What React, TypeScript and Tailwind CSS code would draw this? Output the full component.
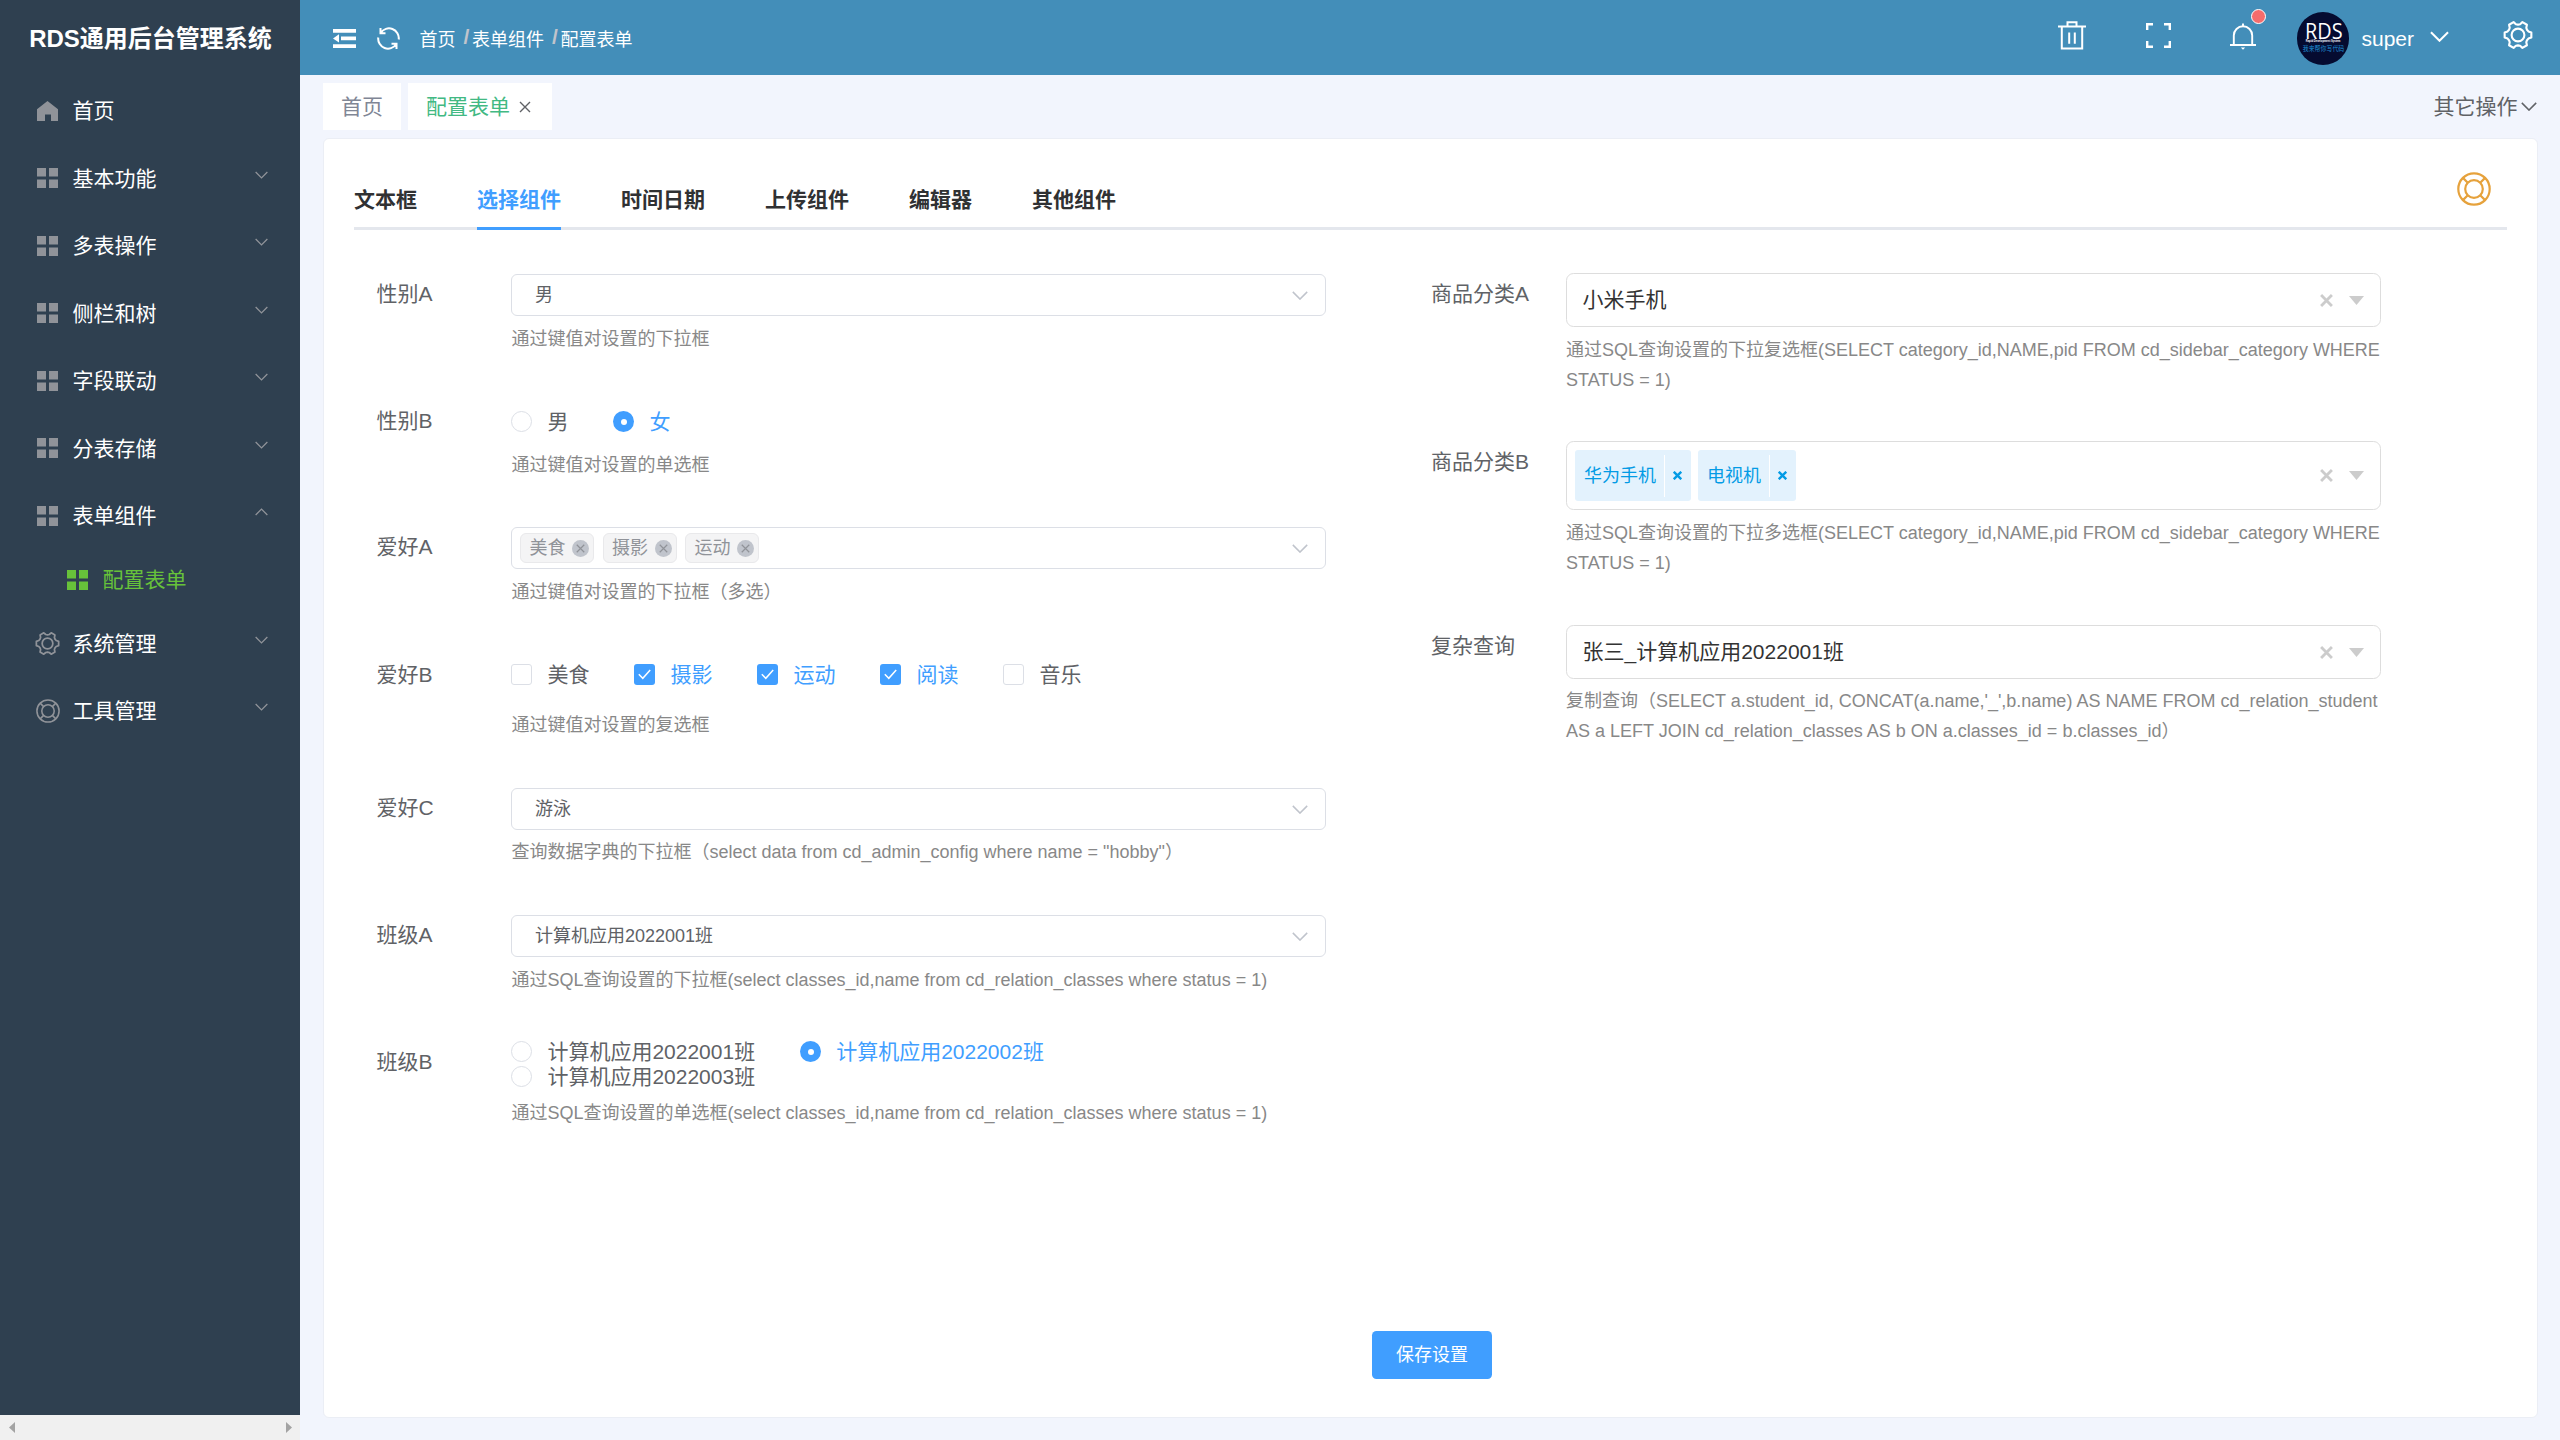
import type { ReactNode } from 'react';
import clsx from 'clsx';

interface MenuEntry {
  title: string;
  icon: 'home' | 'grid' | 'gear' | 'buoy';
  arrow?: 'down' | 'up';
  child?: string;
}

const menu: MenuEntry[] = [
  { title: '首页', icon: 'home' },
  { title: '基本功能', icon: 'grid', arrow: 'down' },
  { title: '多表操作', icon: 'grid', arrow: 'down' },
  { title: '侧栏和树', icon: 'grid', arrow: 'down' },
  { title: '字段联动', icon: 'grid', arrow: 'down' },
  { title: '分表存储', icon: 'grid', arrow: 'down' },
  { title: '表单组件', icon: 'grid', arrow: 'up', child: '配置表单' },
  { title: '系统管理', icon: 'gear', arrow: 'down' },
  { title: '工具管理', icon: 'buoy', arrow: 'down' },
];

const formTabs = ['文本框', '选择组件', '时间日期', '上传组件', '编辑器', '其他组件'];

const gearPoints = Array.from({ length: 6 })
  .flatMap((_, i) => {
    const base = i * 60;
    return [
      [base - 11, 13.6],
      [base + 11, 13.6],
      [base + 19, 11],
      [base + 30, 10.4],
      [base + 41, 11],
    ];
  })
  .map(([deg, r]) => {
    const a = (deg * Math.PI) / 180;
    return `${(15 + r * Math.cos(a)).toFixed(2)},${(15 + r * Math.sin(a)).toFixed(2)}`;
  })
  .join(' ');

function GearIcon({ className }: { className?: string }) {
  return (
    <svg viewBox="0 0 30 30" className={className} fill="none" stroke="currentColor" strokeWidth="2.1" strokeLinejoin="round">
      <polygon points={gearPoints} />
      <circle cx="15" cy="15" r="6.4" />
    </svg>
  );
}

function BuoyIcon({ className }: { className?: string }) {
  return (
    <svg viewBox="0 0 34 34" className={className} fill="none" stroke="currentColor" strokeWidth="2.2">
      <circle cx="17" cy="17" r="15.7" />
      <circle cx="17" cy="17" r="8.8" />
      <path d="M5.900 5.900l4.900 4.900M28.100 5.900l-4.900 4.900M5.900 28.100l4.900-4.900M28.100 28.100l-4.900-4.900" />
    </svg>
  );
}

function GridIcon({ className }: { className?: string }) {
  return (
    <svg viewBox="0 0 21 20" className={className} fill="currentColor">
      <path d="M0 0h9v8.500H0zM12 0h9v8.500h-9zM0 11.500h9V20H0zM12 11.500h9V20h-9z" />
    </svg>
  );
}

function HomeIcon({ className }: { className?: string }) {
  return (
    <svg viewBox="0 0 21 20" className={className} fill="currentColor">
      <path d="M10.500 0L21 8.300V20h-7v-6.500H8V20H0V8.300z" />
    </svg>
  );
}

function Chevron({ className, strokeWidth = 1.3 }: { className?: string; strokeWidth?: number }) {
  return (
    <svg viewBox="0 0 20 11" className={className} fill="none" stroke="currentColor" strokeWidth={strokeWidth}>
      <path d="M1 1l9 9 9-9" vectorEffect="non-scaling-stroke" />
    </svg>
  );
}

function Cross({ className, strokeWidth = 1.4 }: { className?: string; strokeWidth?: number }) {
  return (
    <svg viewBox="0 0 12 12" className={className} fill="none" stroke="currentColor" strokeWidth={strokeWidth}>
      <path d="M1 1l10 10M11 1L1 11" vectorEffect="non-scaling-stroke" />
    </svg>
  );
}

function MenuIcon({ name }: { name: MenuEntry['icon'] }) {
  if (name === 'home') return <HomeIcon className="w-[21px] h-5" />;
  if (name === 'gear') return <GearIcon className="w-[25px] h-[25px]" />;
  if (name === 'buoy') return <BuoyIcon className="w-6 h-6" />;
  return <GridIcon className="w-[21px] h-5" />;
}

function Sidebar() {
  return (
    <aside className="w-[300px] shrink-0 flex flex-col bg-[#2f4050]">
      <div className="h-[77px] flex items-center justify-center pl-px text-2xl font-bold text-white">RDS通用后台管理系统</div>
      <nav className="flex-1">
        {menu.map((item) => (
          <div key={item.title}>
            <div className="h-[67.500px] flex items-center pl-[29.500px] pr-8">
              <span className="w-9 flex justify-center text-[#909399]">
                <MenuIcon name={item.icon} />
              </span>
              <span className="flex-1 ml-[7px] text-[21px] text-white">{item.title}</span>
              {item.arrow && (
                <Chevron className={clsx('w-[13px] h-2 -mt-[7px] text-[#909399]', item.arrow === 'up' && 'rotate-180')} />
              )}
            </div>
            {item.child && (
              <div className="h-[60px] flex items-center pl-[59.500px] text-[#67c23a]">
                <span className="w-9 flex justify-center">
                  <GridIcon className="w-[21px] h-5" />
                </span>
                <span className="ml-[7px] text-[21px]">{item.child}</span>
              </div>
            )}
          </div>
        ))}
      </nav>
      {/* Horizontal scrollbar */}
      <div className="h-[25px] flex items-center justify-between bg-[#f0f0f0] pl-[9px] pr-2">
        <svg viewBox="0 0 6 11" className="w-1.5 h-[11px]" fill="#a3a3a3">
          <path d="M6 0v11L0 5.500z" />
        </svg>
        <svg viewBox="0 0 6 11" className="w-1.5 h-[11px]" fill="#a3a3a3">
          <path d="M0 0v11l6-5.500z" />
        </svg>
      </div>
    </aside>
  );
}

function Header() {
  return (
    <header className="h-[75px] shrink-0 flex items-start bg-[#438eb9] text-white">
      <svg viewBox="0 0 23 19" className="w-[23px] h-[19px] ml-[33px] mt-[29px]" fill="currentColor">
        <path d="M0 0h23v3.700H0zM8 7.500h15v3.700H8zM0 15.300h23V19H0zM0 9.400l6-4.100v8.200z" />
      </svg>
      <svg viewBox="0 0 23 23" className="w-[23px] h-[23px] ml-[21px] mt-[26.500px]" fill="none" stroke="currentColor" strokeWidth="2">
        <path d="M3.500 1v5.200h5M3.800 5.800A9.800 9.800 0 0 1 21.700 12.500M19.500 22v-5.200h-5M19.200 17.200A9.800 9.800 0 0 1 1.300 10.500" />
      </svg>
      <div className="h-[75px] flex items-center ml-[19.500px] pt-1 text-lg">
        <span>首页</span>
        <span className="w-[16.500px] pl-2 -mt-1 font-bold text-[21px] text-[#c0c4cc]">/</span>
        <span>表单组件</span>
        <span className="w-[16.500px] pl-2 -mt-1 font-bold text-[21px] text-[#c0c4cc]">/</span>
        <span>配置表单</span>
      </div>
      <div className="flex-1" />
      <svg viewBox="0 0 28 29" className="w-7 h-[29px] mt-[20.500px]" fill="none" stroke="currentColor" strokeWidth="2">
        <path d="M0 5.500h28M3.800 5.500V27.500h20.400V5.500M9.500 5V1.200h9V5M11.200 11.500v11.200M16.800 11.500v11.200" />
      </svg>
      <svg viewBox="0 0 25 25" className="w-[25px] h-[25px] ml-[60px] mt-[22.500px]" fill="none" stroke="currentColor" strokeWidth="2.400">
        <path d="M1.200 7V1.200H7M18 1.200h5.800V7M23.800 18v5.800H18M7 23.800H1.200V18" />
      </svg>
      <div className="relative ml-[59.500px] mt-[22.500px]">
        <svg viewBox="0 0 26 27" className="w-[26px] h-[27px]" fill="none" stroke="currentColor" strokeWidth="1.900">
          <path d="M0 22h26M3.800 22v-9.500a9.200 9.200 0 0 1 18.400 0V22M13 3.300V.5" />
          <path d="M10.800 24.500h4.400L13 26.800z" fill="currentColor" stroke="none" />
        </svg>
        <span className="absolute -top-[14px] left-[20.500px] w-[15px] h-[15px] rounded-full bg-[#f56c6c] border border-white" />
      </div>
      <div className="w-[52px] h-[53px] ml-[41px] mt-3 rounded-full bg-[#050b30] flex flex-col items-center overflow-hidden">
        <span className="mt-[7px] h-[21px] font-['Open_Sans','Noto_Sans_CJK_SC',sans-serif] text-[22px] leading-[23px] scale-x-90">RDS</span>
        <span className="h-[3px] font-bold text-[3.500px] leading-[3px] whitespace-nowrap scale-x-75">Rapid Development System</span>
        <span className="mt-[1px] text-[7px] leading-[10px] text-[#1e8fd5] whitespace-nowrap scale-x-[.85]">我来帮你写代码</span>
      </div>
      <span className="ml-3 h-[75px] leading-[77px] text-[21px]">super</span>
      <Chevron className="w-[19px] h-[11px] ml-4 mt-[31px]" strokeWidth={2} />
      <GearIcon className="w-[30px] h-[30px] ml-[54px] mr-[27px] mt-5" />
    </header>
  );
}

function TabsBar() {
  return (
    <div className="h-[47px] mt-2 flex text-[21px]">
      <div className="px-[18px] flex items-center bg-white text-[#808695]">首页</div>
      <div className="ml-[7px] pl-[18px] pr-[21px] flex items-center bg-white text-[#42b983]">
        配置表单
        <Cross className="w-3 h-3 ml-[9px] text-[#606266]" />
      </div>
      <div className="ml-auto mr-[1.500px] flex items-center text-[#606266]">
        其它操作
        <Chevron className="w-[16px] h-[9px] ml-[3px]" strokeWidth={1.5} />
      </div>
    </div>
  );
}

interface FieldProps {
  label: string;
  hint: string;
  height: string;
  controlHeight: string;
  children: ReactNode;
}

function Field({ label, hint, height, controlHeight, children }: FieldProps) {
  return (
    <div className={clsx('flex', height)}>
      <div className="w-[135px] shrink-0 text-[21px] leading-[42px] text-[#606266]">{label}</div>
      <div className="w-[815px]">
        <div className={controlHeight}>{children}</div>
        <p className="text-lg leading-[30px] text-[#888]">{hint}</p>
      </div>
    </div>
  );
}

function Select({ value, tags }: { value?: string; tags?: string[] }) {
  return (
    <div className={clsx('h-[42px] relative top-px flex items-center border border-[#dcdfe6] rounded-md pr-[17px]', tags ? 'pl-2' : 'pl-[22.500px]')}>
      {value && <span className="text-lg text-[#606266]">{value}</span>}
      {tags?.map((tag) => (
        <span
          key={tag}
          className="w-[74px] h-[30px] mr-[8.500px] pl-2 flex items-center border border-[#e9e9eb] bg-[#f4f4f5] rounded-md text-lg text-[#909399]"
        >
          {tag}
          <span className="w-[17px] h-[17px] ml-[7px] rounded-full bg-[#c0c4cc] flex items-center justify-center">
            <Cross className="w-[9px] h-[9px]" strokeWidth={1.2} />
          </span>
        </span>
      ))}
      <Chevron className="w-4 h-[9px] ml-auto text-[#c0c4cc]" strokeWidth={1.5} />
    </div>
  );
}

function Radio({ label, checked }: { label: string; checked?: boolean }) {
  return (
    <label className={clsx('flex items-center mr-[45px] text-[21px] leading-[25px]', checked ? 'text-[#409eff]' : 'text-[#606266]')}>
      <span
        className={clsx(
          'w-[21px] h-[21px] mr-[15px] rounded-full flex items-center justify-center',
          checked ? 'bg-[#409eff]' : 'border border-[#dcdfe6]'
        )}
      >
        {checked && <span className="w-1.5 h-1.5 rounded-full bg-white" />}
      </span>
      {label}
    </label>
  );
}

function Checkbox({ label, checked }: { label: string; checked?: boolean }) {
  return (
    <label className={clsx('flex items-center mr-[45px] text-[21px]', checked ? 'text-[#409eff]' : 'text-[#606266]')}>
      <span
        className={clsx(
          'w-[21px] h-[21px] mr-[15px] rounded-[3px] flex items-center justify-center',
          checked ? 'bg-[#409eff]' : 'border border-[#dcdfe6]'
        )}
      >
        {checked && (
          <svg viewBox="0 0 13 11" className="w-[13px] h-[11px]" fill="none" stroke="#fff" strokeWidth="1.500">
            <path d="M.8 5.300l4 4L12.200 1" />
          </svg>
        )}
      </span>
      {label}
    </label>
  );
}

function TreeSelect({ value, tags }: { value?: string; tags?: string[] }) {
  return (
    <div
      className={clsx(
        'flex items-center border border-[#ddd] rounded-[7.500px] pr-4',
        tags ? 'h-[69px] pl-2' : 'h-[54px] pl-[15.500px]'
      )}
    >
      {value && <span className="text-[21px] text-[#333]">{value}</span>}
      {tags?.map((tag) => (
        <span key={tag} className="h-[51px] mr-[7px] pl-[9px] flex items-center rounded-[3px] bg-[#e3f2fd] text-lg text-[#039be5]">
          {tag}
          <span className="h-[42px] w-[27px] ml-2 border-l border-white flex items-center justify-center">
            <Cross className="w-[9px] h-[9px]" strokeWidth={2.4} />
          </span>
        </span>
      ))}
      <Cross className="w-[13px] h-[13px] ml-auto text-[#ccc]" strokeWidth={2.8} />
      <svg viewBox="0 0 15 9" className="w-[15px] h-[9px] ml-4" fill="#ccc">
        <path d="M0 0h15L7.500 9z" />
      </svg>
    </div>
  );
}

export default function App() {
  return (
    <div className="w-[2560px] h-[1440px] flex overflow-hidden bg-[#f2f5fd] font-['Liberation_Sans','Noto_Sans_CJK_SC',sans-serif]">
      <Sidebar />
      <div className="flex-1 flex flex-col">
        <Header />
        <div className="flex-1 flex flex-col pl-[23px] pr-[22px]">
          <TabsBar />
          <main className="h-[1280px] mt-2 flex flex-col border border-[#ebeef5] rounded-md bg-white">
            {/* Form group tabs */}
            <div className="h-[91px] ml-[30px] mr-[30px] flex gap-[60px] items-end border-b-[3px] border-[#e4e7ed] text-[21px] font-bold text-[#303133]">
              {formTabs.map((tab) => (
                <span
                  key={tab}
                  className={clsx('h-[46px] -mb-[3px] border-b-[3px]', tab === '选择组件' ? 'text-[#409eff] border-[#409eff]' : 'border-transparent')}
                >
                  {tab}
                </span>
              ))}
              <BuoyIcon className="w-[34px] h-[34px] ml-auto mr-4 mb-[21px] text-[#e6a23c]" />
            </div>

            <div className="h-[1101px] shrink-0 flex pt-[43px] pl-[52.400px]">
              <div className="w-[1054.600px]">
                <Field label="性别A" hint="通过键值对设置的下拉框" height="h-[127px]" controlHeight="h-[51px]">
                  <Select value="男" />
                </Field>
                <Field label="性别B" hint="通过键值对设置的单选框" height="h-[126px]" controlHeight="h-[50px]">
                  <div className="flex h-[43px]">
                    <Radio label="男" />
                    <Radio label="女" checked />
                  </div>
                </Field>
                <Field label="爱好A" hint="通过键值对设置的下拉框（多选）" height="h-[128px]" controlHeight="h-[51px]">
                  <Select tags={['美食', '摄影', '运动']} />
                </Field>
                <Field label="爱好B" hint="通过键值对设置的复选框" height="h-[133px]" controlHeight="h-[56px]">
                  <div className="flex h-[41px]">
                    <Checkbox label="美食" />
                    <Checkbox label="摄影" checked />
                    <Checkbox label="运动" checked />
                    <Checkbox label="阅读" checked />
                    <Checkbox label="音乐" />
                  </div>
                </Field>
                <Field label="爱好C" hint={'查询数据字典的下拉框（select data from cd_admin_config where name = "hobby"）'} height="h-[127px]" controlHeight="h-[50px]">
                  <Select value="游泳" />
                </Field>
                <Field label="班级A" hint="通过SQL查询设置的下拉框(select classes_id,name from cd_relation_classes where status = 1)" height="h-[127px]" controlHeight="h-[51px]">
                  <Select value="计算机应用2022001班" />
                </Field>
                <Field label="班级B" hint="通过SQL查询设置的单选框(select classes_id,name from cd_relation_classes where status = 1)" height="h-[127px]" controlHeight="h-[59px]">
                  <div className="flex flex-wrap -mt-[2px]">
                    <Radio label="计算机应用2022001班" />
                    <Radio label="计算机应用2022002班" checked />
                    <Radio label="计算机应用2022003班" />
                  </div>
                </Field>
              </div>

              <div>
                <Field label="商品分类A" hint="通过SQL查询设置的下拉复选框(SELECT category_id,NAME,pid FROM cd_sidebar_category WHERE STATUS = 1)" height="h-[168px]" controlHeight="h-[62px]">
                  <TreeSelect value="小米手机" />
                </Field>
                <Field label="商品分类B" hint="通过SQL查询设置的下拉多选框(SELECT category_id,NAME,pid FROM cd_sidebar_category WHERE STATUS = 1)" height="h-[184px]" controlHeight="h-[77px]">
                  <TreeSelect tags={['华为手机', '电视机']} />
                </Field>
                <Field label="复杂查询" hint="复制查询（SELECT a.student_id, CONCAT(a.name,'_',b.name) AS NAME FROM cd_relation_student AS a LEFT JOIN cd_relation_classes AS b ON a.classes_id = b.classes_id）" height="h-[160px]" controlHeight="h-[61px]">
                  <TreeSelect value="张三_计算机应用2022001班" />
                </Field>
              </div>
            </div>

            <button className="w-[120px] h-12 ml-[1048px] rounded-[4.500px] bg-[#409eff] text-lg text-white">保存设置</button>
          </main>
        </div>
      </div>
    </div>
  );
}
